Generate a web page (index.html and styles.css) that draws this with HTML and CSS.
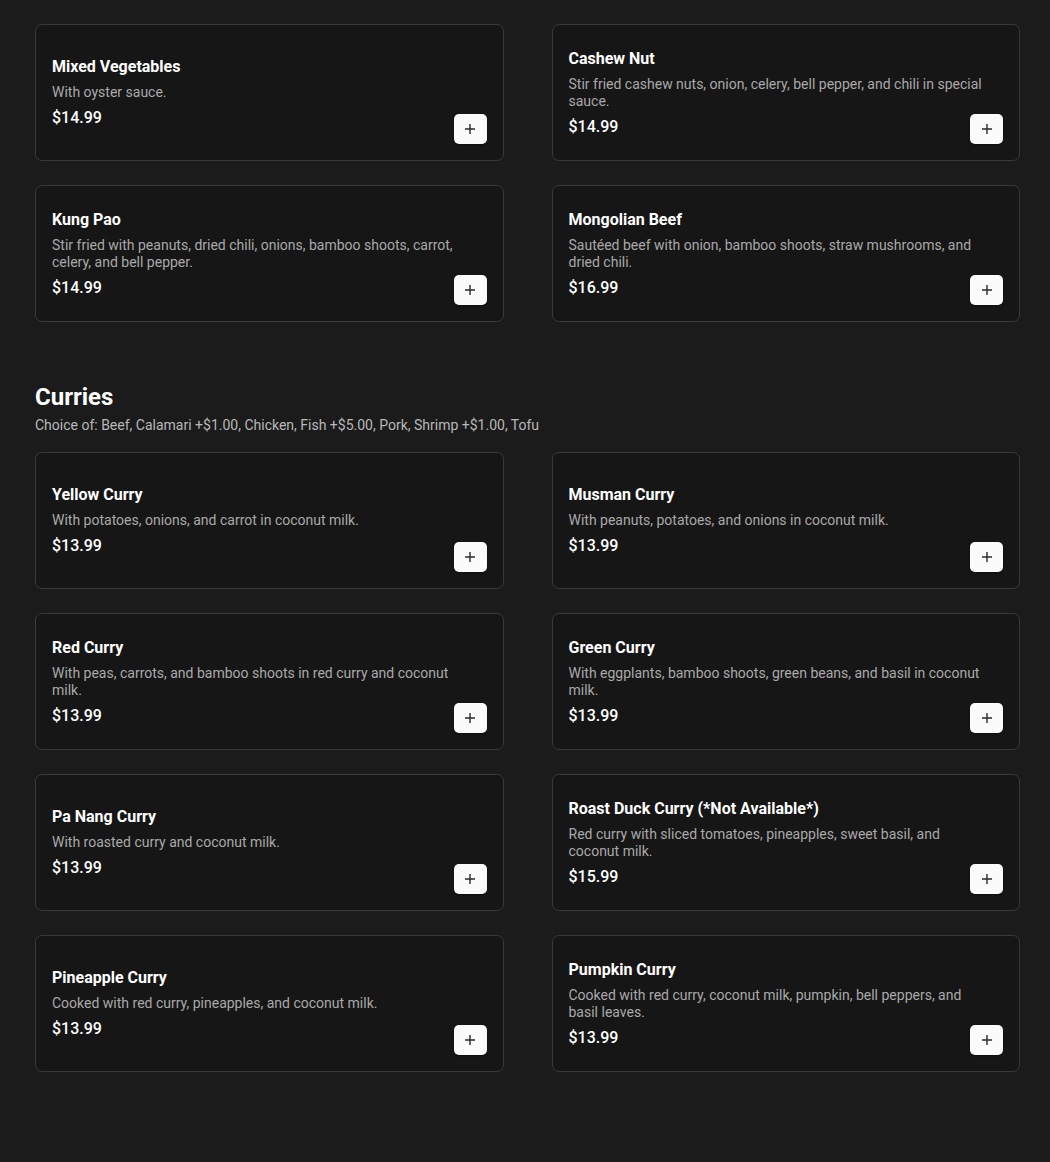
FILE: index.html
```html
<!DOCTYPE html>
<html lang="en">
<head>
<meta charset="utf-8">
<title>Menu</title>
<link rel="stylesheet" href="styles.css">
</head>
<body>
<main class="page">
  <section class="section">
    <div class="grid">
      <div class="card"><div class="info"><h3 class="name">Mixed Vegetables</h3><p class="desc">With oyster sauce.</p><div class="price">$14.99</div></div><button class="add" aria-label="Add"><svg viewBox="0 0 12 12" width="12" height="12"><path d="M6 1v10M1 6h10" stroke="#2a2a2a" stroke-width="1.4" fill="none"/></svg></button></div>
      <div class="card"><div class="info"><h3 class="name">Cashew Nut</h3><p class="desc">Stir fried cashew nuts, onion, celery, bell pepper, and chili in special sauce.</p><div class="price">$14.99</div></div><button class="add" aria-label="Add"><svg viewBox="0 0 12 12" width="12" height="12"><path d="M6 1v10M1 6h10" stroke="#2a2a2a" stroke-width="1.4" fill="none"/></svg></button></div>
      <div class="card"><div class="info"><h3 class="name">Kung Pao</h3><p class="desc">Stir fried with peanuts, dried chili, onions, bamboo shoots, carrot, celery, and bell pepper.</p><div class="price">$14.99</div></div><button class="add" aria-label="Add"><svg viewBox="0 0 12 12" width="12" height="12"><path d="M6 1v10M1 6h10" stroke="#2a2a2a" stroke-width="1.4" fill="none"/></svg></button></div>
      <div class="card"><div class="info"><h3 class="name">Mongolian Beef</h3><p class="desc">Sautéed beef with onion, bamboo shoots, straw mushrooms, and dried chili.</p><div class="price">$16.99</div></div><button class="add" aria-label="Add"><svg viewBox="0 0 12 12" width="12" height="12"><path d="M6 1v10M1 6h10" stroke="#2a2a2a" stroke-width="1.4" fill="none"/></svg></button></div>
    </div>
  </section>
  <section class="section">
    <h2 class="section-title">Curries</h2>
    <p class="section-note">Choice of: Beef, Calamari +$1.00, Chicken, Fish +$5.00, Pork, Shrimp +$1.00, Tofu</p>
    <div class="grid">
      <div class="card"><div class="info"><h3 class="name">Yellow Curry</h3><p class="desc">With potatoes, onions, and carrot in coconut milk.</p><div class="price">$13.99</div></div><button class="add" aria-label="Add"><svg viewBox="0 0 12 12" width="12" height="12"><path d="M6 1v10M1 6h10" stroke="#2a2a2a" stroke-width="1.4" fill="none"/></svg></button></div>
      <div class="card"><div class="info"><h3 class="name">Musman Curry</h3><p class="desc">With peanuts, potatoes, and onions in coconut milk.</p><div class="price">$13.99</div></div><button class="add" aria-label="Add"><svg viewBox="0 0 12 12" width="12" height="12"><path d="M6 1v10M1 6h10" stroke="#2a2a2a" stroke-width="1.4" fill="none"/></svg></button></div>
      <div class="card"><div class="info"><h3 class="name">Red Curry</h3><p class="desc">With peas, carrots, and bamboo shoots in red curry and coconut milk.</p><div class="price">$13.99</div></div><button class="add" aria-label="Add"><svg viewBox="0 0 12 12" width="12" height="12"><path d="M6 1v10M1 6h10" stroke="#2a2a2a" stroke-width="1.4" fill="none"/></svg></button></div>
      <div class="card"><div class="info"><h3 class="name">Green Curry</h3><p class="desc">With eggplants, bamboo shoots, green beans, and basil in coconut milk.</p><div class="price">$13.99</div></div><button class="add" aria-label="Add"><svg viewBox="0 0 12 12" width="12" height="12"><path d="M6 1v10M1 6h10" stroke="#2a2a2a" stroke-width="1.4" fill="none"/></svg></button></div>
      <div class="card"><div class="info"><h3 class="name">Pa Nang Curry</h3><p class="desc">With roasted curry and coconut milk.</p><div class="price">$13.99</div></div><button class="add" aria-label="Add"><svg viewBox="0 0 12 12" width="12" height="12"><path d="M6 1v10M1 6h10" stroke="#2a2a2a" stroke-width="1.4" fill="none"/></svg></button></div>
      <div class="card"><div class="info"><h3 class="name">Roast Duck Curry (*Not Available*)</h3><p class="desc">Red curry with sliced tomatoes, pineapples, sweet basil, and coconut milk.</p><div class="price">$15.99</div></div><button class="add" aria-label="Add"><svg viewBox="0 0 12 12" width="12" height="12"><path d="M6 1v10M1 6h10" stroke="#2a2a2a" stroke-width="1.4" fill="none"/></svg></button></div>
      <div class="card"><div class="info"><h3 class="name">Pineapple Curry</h3><p class="desc">Cooked with red curry, pineapples, and coconut milk.</p><div class="price">$13.99</div></div><button class="add" aria-label="Add"><svg viewBox="0 0 12 12" width="12" height="12"><path d="M6 1v10M1 6h10" stroke="#2a2a2a" stroke-width="1.4" fill="none"/></svg></button></div>
      <div class="card"><div class="info"><h3 class="name">Pumpkin Curry</h3><p class="desc">Cooked with red curry, coconut milk, pumpkin, bell peppers, and basil leaves.</p><div class="price">$13.99</div></div><button class="add" aria-label="Add"><svg viewBox="0 0 12 12" width="12" height="12"><path d="M6 1v10M1 6h10" stroke="#2a2a2a" stroke-width="1.4" fill="none"/></svg></button></div>
    </div>
  </section>
</main>
</body>
</html>
```
FILE: styles.css
```css
* { box-sizing: border-box; }
html, body { margin: 0; padding: 0; }
body {
  background: #1b1b1b;
  color: #fff;
  font-family: Roboto, "Noto Sans", Arial, sans-serif;
  height: 1162px;
  overflow: hidden;
}
.page {
  width: 985px;
  margin-left: 35px;
  padding-top: 24px;
}
.section + .section { margin-top: 59px; }
.section-title {
  margin: 0;
  font-size: 24px;
  line-height: 32px;
  font-weight: 700;
}
.section-note {
  margin: 2px 0 17px;
  font-size: 14px;
  line-height: 20px;
  color: #b8b8b8;
}
.grid {
  display: grid;
  grid-template-columns: 1fr 1fr;
  column-gap: 48px;
  row-gap: 24px;
}
.card {
  display: grid;
  grid-template-columns: 1fr;
  grid-template-rows: 1fr;
  min-height: 137px;
  padding: 16px;
  border: 1px solid #393939;
  border-radius: 7px;
  background: #161616;
}
.info {
  grid-area: 1 / 1;
  align-self: center;
  padding-right: 16px;
}
.name {
  margin: 0;
  font-size: 16px;
  line-height: 24px;
  font-weight: 700;
}
.desc {
  margin: 5px 0 0;
  font-size: 14px;
  line-height: 17px;
  color: #a9a9a9;
}
.price {
  margin-top: 5px;
  font-size: 16px;
  line-height: 24px;
  font-weight: 500;
}
.add {
  grid-area: 1 / 1;
  align-self: end;
  justify-self: end;
  width: 33px;
  height: 30px;
  padding: 0;
  border: 0;
  border-radius: 5px;
  background: #fbfbfb;
  box-shadow: 0 1px 2px rgba(0,0,0,0.4);
  display: flex;
  align-items: center;
  justify-content: center;
  cursor: pointer;
}
```
